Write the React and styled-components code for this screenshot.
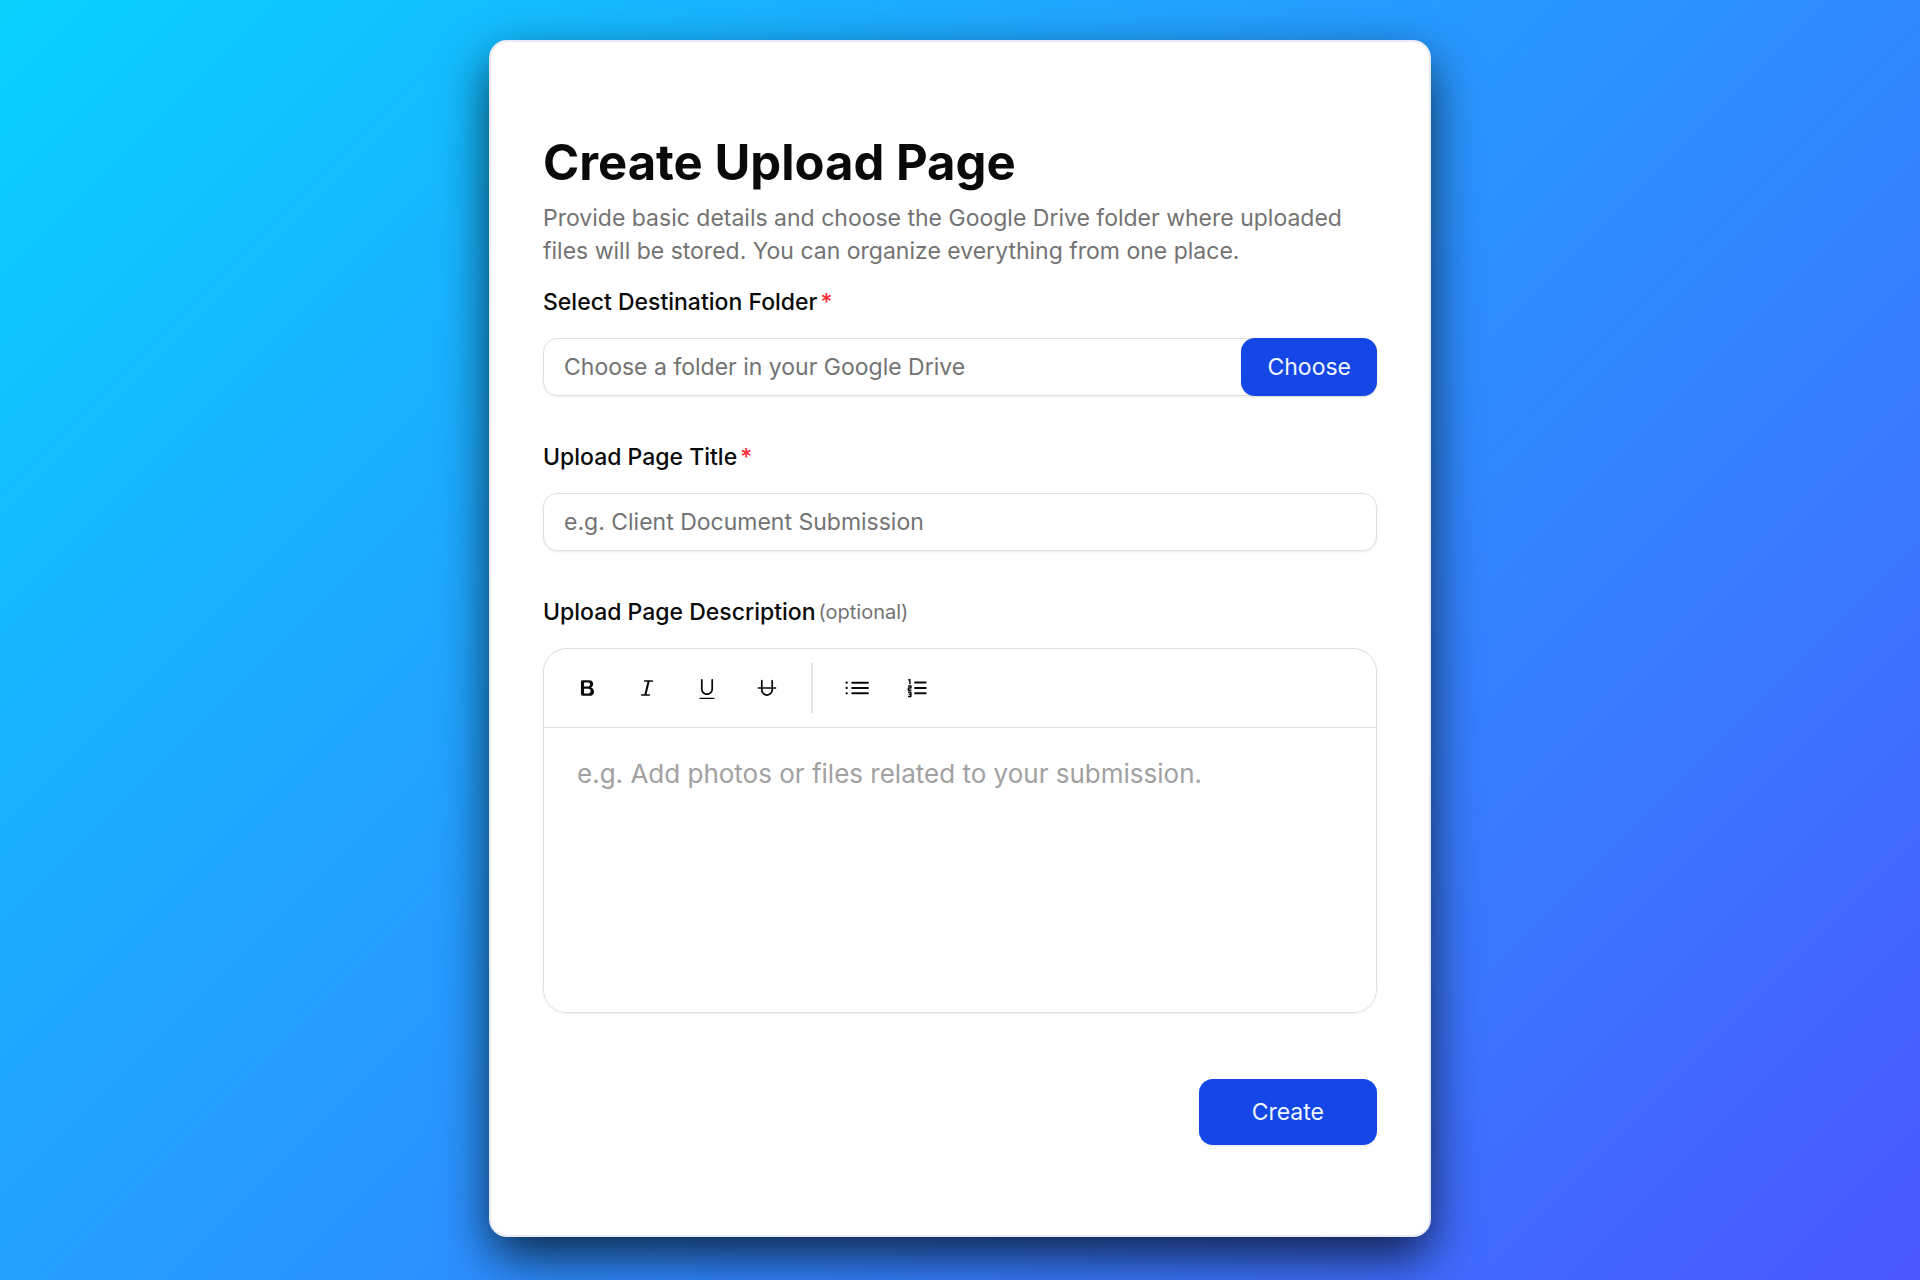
import React, { useState } from 'react';
import styled, { createGlobalStyle } from 'styled-components';
import { RxFontBold, RxFontItalic, RxUnderline, RxStrikethrough } from 'react-icons/rx';

const GlobalStyle = createGlobalStyle`
    *, *::before, *::after {
        box-sizing: border-box;
    }

    body {
        margin: 0;
        font-family: Inter, 'Liberation Sans', sans-serif;
        color: #0a0a0a;
    }

    button, input, textarea {
        font: inherit;
    }
`;

const Page = styled.main`
    min-height: 100vh;
    display: flex;
    align-items: flex-start;
    justify-content: center;
    padding: 40px 24px;
    background: linear-gradient(135deg, #08d2ff 0%, #1cacff 29%, #3a77ff 76%, #4a56ff 100%);
`;

const Card = styled.form`
    width: 100%;
    max-width: 942px;
    padding: 90px 52px;
    background: #fff;
    border: 2px solid #e8ebf5;
    border-radius: 18px;
    box-shadow: 0 20px 50px -2px rgba(0, 0, 0, 0.75);
`;

const Title = styled.h1`
    margin: 0;
    font-size: 49px;
    line-height: 61px;
    font-weight: 700;
`;

const Intro = styled.p`
    margin: 9px 0 0;
    font-size: 23px;
    line-height: 33px;
    color: #737373;
`;

const Field = styled.div`
    margin-top: ${({ $first }) => ($first ? '16px' : '43px')};
`;

const Label = styled.label`
    display: flex;
    align-items: center;
    gap: 3px;
    height: 36px;
    margin-bottom: 18px;
    font-size: 23px;
    font-weight: 500;
`;

const Required = styled.span`
    color: #fb2c36;
`;

const Optional = styled.small`
    font-size: 20px;
    font-weight: 400;
    color: #737373;
`;

const InputRow = styled.div`
    display: flex;
    height: 58px;
    border: 1px solid #dfdfdf;
    border-radius: 14px;
    box-shadow: 0 1px 2px rgba(0, 0, 0, 0.08);
`;

const Input = styled.input`
    flex: 1;
    min-width: 0;
    padding: 0 20px;
    border: 0;
    border-radius: 14px;
    outline: none;
    background: transparent;
    font-size: 23px;
    color: #0a0a0a;

    &::placeholder {
        color: #737373;
        opacity: 1;
    }
`;

const Button = styled.button`
    border: 0;
    border-radius: 14px;
    background: #1447e6;
    color: #eff6ff;
    font-size: 23px;
    cursor: pointer;
    box-shadow: 0 1px 2px rgba(0, 0, 0, 0.1);
`;

const ChooseButton = styled(Button)`
    margin: -1px;
    padding: 0 26px;
`;

const CreateButton = styled(Button)`
    height: 66px;
    padding: 0 53px;
`;

const Editor = styled.div`
    border: 1px solid #dfdfdf;
    border-radius: 24px;
    overflow: hidden;
    box-shadow: 0 1px 2px rgba(0, 0, 0, 0.08);
`;

const Toolbar = styled.div`
    display: flex;
    align-items: center;
    gap: 12px;
    height: 79px;
    padding: 0 19px;
    border-bottom: 1px solid #dfdfdf;
`;

const ToolButton = styled.button`
    display: flex;
    align-items: center;
    justify-content: center;
    width: 48px;
    height: 48px;
    padding: 0;
    border: 0;
    border-radius: 8px;
    background: ${({ $active }) => ($active ? '#f5f5f5' : 'transparent')};
    color: #0a0a0a;
    cursor: pointer;
`;

const Divider = styled.span`
    width: 2px;
    height: 50px;
    margin: 0 8px;
    background: #e5e5e5;
`;

const TextArea = styled.textarea`
    display: block;
    width: 100%;
    height: 284px;
    padding: 26px 33px;
    border: 0;
    outline: none;
    resize: none;
    font-size: 26px;
    line-height: 40px;

    &::placeholder {
        color: #a1a1a1;
        opacity: 1;
    }
`;

const Actions = styled.div`
    display: flex;
    justify-content: flex-end;
    margin-top: 66px;
`;

const BulletListIcon = ({ size }) => (
    <svg width={size} height={size} viewBox='0 0 26 26' fill='none' stroke='currentColor' strokeLinecap='round'>
        <path d='M8.3 7.7h15.6M8.3 13h15.6M8.3 18.3h15.6' strokeWidth='2.1' />
        <path d='M2.6 7.7h.1M2.6 13h.1M2.6 18.3h.1' strokeWidth='2.3' />
    </svg>
);

const NumberedListIcon = ({ size }) => (
    <svg width={size} height={size} viewBox='0 0 26 26' fill='none' stroke='currentColor'>
        <path d='M10.3 7.5h12.2M10.3 13h12.2M10.3 18.3h12.2' strokeWidth='2.1' />
        <path
            d='M4.2 4.8h1.7v4.4M4 11h2.9v2H4.4v2.2h3M4 17.2h2.9v4.2H4M4.8 19.3h2'
            strokeWidth='1.5'
            strokeLinejoin='round'
        />
    </svg>
);

const textTools = [
    { name: 'Bold', Icon: RxFontBold },
    { name: 'Italic', Icon: RxFontItalic },
    { name: 'Underline', Icon: RxUnderline },
    { name: 'Strikethrough', Icon: RxStrikethrough },
];

const listTools = [
    { name: 'Bullet list', Icon: BulletListIcon },
    { name: 'Numbered list', Icon: NumberedListIcon },
];

const App = () => {
    const [inputs, setInputs] = useState({ folder: '', title: '', description: '' });
    const [active, setActive] = useState({});

    const handleInputs = e => {
        const { name, value } = e.target;
        setInputs({ ...inputs, [name]: value });
    };

    const renderTool = ({ name, Icon }) => (
        <ToolButton
            key={name}
            type='button'
            aria-label={name}
            $active={active[name]}
            onClick={() => setActive({ ...active, [name]: !active[name] })}
        >
            <Icon size={26} />
        </ToolButton>
    );

    return (
        <>
            <GlobalStyle />
            <Page>
                <Card onSubmit={e => e.preventDefault()}>
                    <Title>Create Upload Page</Title>
                    <Intro>
                        Provide basic details and choose the Google Drive folder where uploaded files will be stored. You
                        can organize everything from one place.
                    </Intro>
                    <Field $first>
                        <Label htmlFor='folder'>
                            Select Destination Folder<Required>*</Required>
                        </Label>
                        <InputRow>
                            <Input
                                id='folder'
                                name='folder'
                                placeholder='Choose a folder in your Google Drive'
                                value={inputs.folder}
                                onChange={handleInputs}
                            />
                            <ChooseButton type='button'>Choose</ChooseButton>
                        </InputRow>
                    </Field>
                    <Field>
                        <Label htmlFor='title'>
                            Upload Page Title<Required>*</Required>
                        </Label>
                        <InputRow>
                            <Input
                                id='title'
                                name='title'
                                placeholder='e.g. Client Document Submission'
                                value={inputs.title}
                                onChange={handleInputs}
                            />
                        </InputRow>
                    </Field>
                    <Field>
                        <Label htmlFor='description'>
                            Upload Page Description<Optional>(optional)</Optional>
                        </Label>
                        <Editor>
                            <Toolbar>
                                {textTools.map(renderTool)}
                                <Divider />
                                {listTools.map(renderTool)}
                            </Toolbar>
                            <TextArea
                                id='description'
                                name='description'
                                placeholder='e.g. Add photos or files related to your submission.'
                                value={inputs.description}
                                onChange={handleInputs}
                            />
                        </Editor>
                    </Field>
                    <Actions>
                        <CreateButton type='submit'>Create</CreateButton>
                    </Actions>
                </Card>
            </Page>
        </>
    );
};

export default App;
